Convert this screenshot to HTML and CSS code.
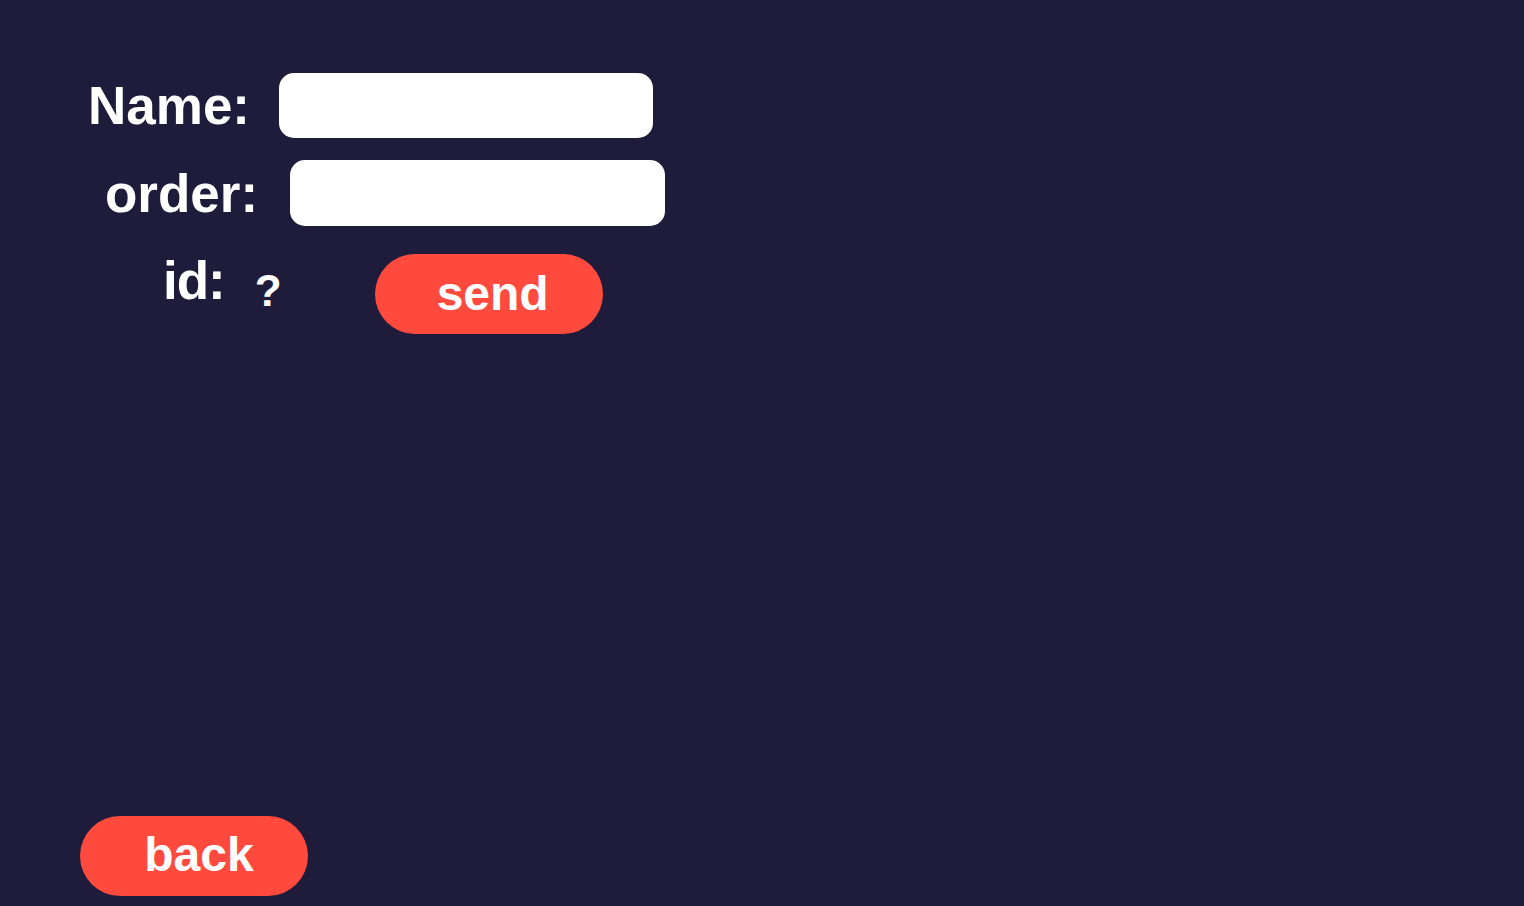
FILE: index.html
```html
<!DOCTYPE html>
<html lang="en">
<head>
<meta charset="utf-8">
<title>Order</title>
<link rel="stylesheet" href="styles.css">
</head>
<body>
<main class="page">
  <form class="form">
    <div class="row row-name">
      <label class="label" for="name">Name:</label>
      <input class="field" id="name" type="text">
    </div>
    <div class="row row-order">
      <label class="label" for="order">order:</label>
      <input class="field" id="order" type="text">
    </div>
    <div class="row row-id">
      <span class="label id-label">id:</span>
      <span class="id-value">?</span>
      <button class="btn send" type="button">send</button>
    </div>
  </form>
  <button class="btn back" type="button">back</button>
</main>
</body>
</html>
```

FILE: styles.css
```css
* { box-sizing: border-box; }

html, body {
  margin: 0;
  padding: 0;
  height: 100%;
}

body {
  background: #1e1c3a;
  color: #ffffff;
  font-family: "Liberation Sans", Arial, sans-serif;
  font-weight: 700;
}

.page {
  min-height: 100vh;
  display: flex;
  flex-direction: column;
  padding: 73px 0 10px 0;
}

.form {
  display: flex;
  flex-direction: column;
}

.row {
  display: flex;
  align-items: center;
}

.label {
  font-size: 53px;
  line-height: 1;
  color: #ffffff;
}

.field {
  display: block;
  border: none;
  outline: none;
  background: #ffffff;
  border-radius: 15px;
  height: 65px;
  width: 374px;
  padding: 0 16px;
  font: inherit;
}

.row-name {
  padding-left: 88px;
  gap: 29px;
}

.row-order {
  margin-top: 22px;
  padding-left: 105px;
  gap: 32px;
}

.row-order .field {
  height: 66px;
  width: 375px;
}

.row-id {
  margin-top: 28px;
  padding-left: 163px;
  align-items: flex-start;
}

.id-label {
  margin-top: 0;
  letter-spacing: -1px;
}

.id-value {
  font-size: 44px;
  line-height: 1;
  margin-top: 15px;
  margin-left: 30px;
}

.btn {
  display: flex;
  align-items: center;
  justify-content: center;
  width: 228px;
  height: 80px;
  border: none;
  border-radius: 40px;
  background: #ff4a3d;
  color: #ffffff;
  font-family: "Liberation Sans", Arial, sans-serif;
  font-weight: 700;
  font-size: 48px;
  line-height: 1;
  padding: 0;
  cursor: pointer;
}

.send {
  margin-left: 93px;
  padding-left: 8px;
}

.back {
  margin-top: auto;
  margin-left: 80px;
  padding-left: 10px;
  padding-bottom: 2px;
}
```
